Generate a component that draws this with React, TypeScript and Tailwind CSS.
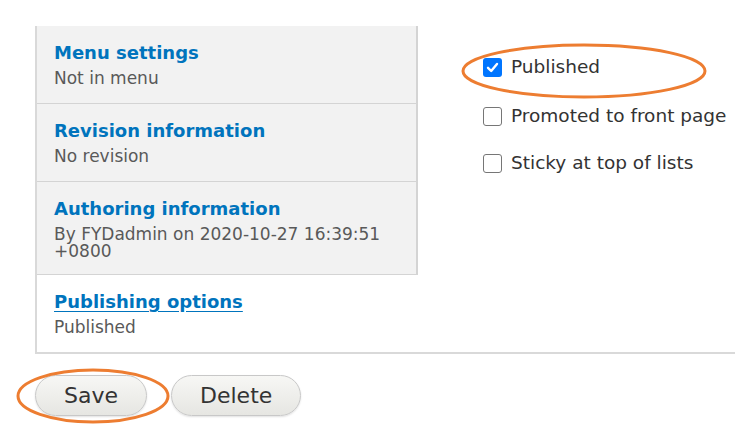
import React from 'react';

interface TabItem {
  title: string;
  summary: string;
  tall?: boolean;
  active?: boolean;
}

const tabs: TabItem[] = [
  { title: 'Menu settings', summary: 'Not in menu' },
  { title: 'Revision information', summary: 'No revision' },
  { title: 'Authoring information', summary: 'By FYDadmin on 2020-10-27 16:39:51 +0800', tall: true },
  { title: 'Publishing options', summary: 'Published', active: true },
];

const options = [
  { label: 'Published', checked: true },
  { label: 'Promoted to front page', checked: false },
  { label: 'Sticky at top of lists', checked: false },
];

const Checkbox: React.FC<{ checked: boolean }> = ({ checked }) =>
  checked ? (
    <span className="flex h-[19px] w-[19px] items-center justify-center rounded-[3px] bg-[#0075ff]">
      <svg width="13" height="13" viewBox="0 0 13 13">
        <path d="M2 6.8 L5.2 10 L11 3" fill="none" stroke="#fff" strokeWidth="2.4" strokeLinecap="round" strokeLinejoin="round" />
      </svg>
    </span>
  ) : (
    <span className="h-[19px] w-[19px] rounded-[3px] border border-[#767676] bg-white" />
  );

const App: React.FC = () => {
  return (
    <div className="relative h-[438px] w-[735px] overflow-hidden bg-white pt-[26px] font-['DejaVu_Sans',sans-serif]">
      <div className="ml-[35px] flex w-[720px] border-b-2 border-l-2 border-[#d9d9d9]">
        <div className="w-[381px] shrink-0">
          {tabs.map((tab) => (
            <div
              key={tab.title}
              className={`pl-[17px] pr-[18px] pt-[15px] ${tab.tall ? 'pb-[14px]' : 'pb-[16px]'} ${
                tab.active ? 'bg-white' : 'border-b border-r-2 border-[#d4d4d4] bg-[#f2f2f2]'
              }`}
            >
              <a
                className={`block text-[18px] font-bold leading-[24px] text-[#0074bd] ${tab.active ? 'underline underline-offset-[3px]' : ''}`}
              >
                {tab.title}
              </a>
              <p className="mt-[5px] text-[17px] leading-[17px] text-[#595959]">{tab.summary}</p>
            </div>
          ))}
        </div>
        <div className="flex-1 pl-[65px] pt-[29px]">
          {options.map((opt, i) => (
            <label
              key={opt.label}
              className={`flex h-[24px] items-center gap-[9px] text-[18.5px] text-[#333] ${i === 0 ? '' : i === 1 ? 'mt-[25px]' : 'mt-[23px]'}`}
            >
              <Checkbox checked={opt.checked} />
              <span className="whitespace-nowrap">{opt.label}</span>
            </label>
          ))}
        </div>
      </div>

      <div className="ml-[35px] mt-[21px] flex gap-[24px]">
        {['Save', 'Delete'].map((label) => (
          <button
            key={label}
            className="h-[41px] rounded-full border border-[#c8c8c8] bg-gradient-to-b from-[#f7f7f5] to-[#e6e6e2] px-[28px] text-[22px] leading-[39px] text-[#333] shadow-[0_1px_2px_rgba(0,0,0,0.12)]"
          >
            {label}
          </button>
        ))}
      </div>

      {/* annotation marks */}
      <svg className="pointer-events-none absolute left-0 top-0" width="735" height="438">
        <ellipse cx="584" cy="71" rx="121" ry="26" fill="none" stroke="#ed7d31" strokeWidth="3" />
        <ellipse cx="93" cy="396" rx="75" ry="26" fill="none" stroke="#ed7d31" strokeWidth="3" />
      </svg>
    </div>
  );
};

export default App;
